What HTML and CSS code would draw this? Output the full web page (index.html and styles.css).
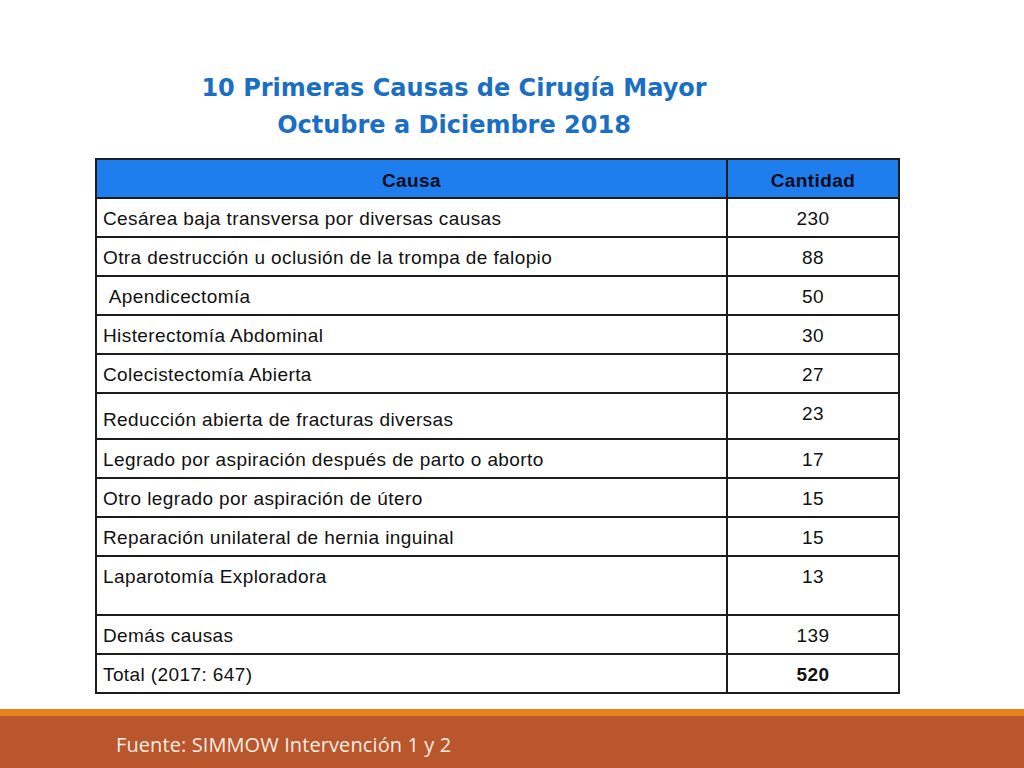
FILE: index.html
```html
<!DOCTYPE html>
<html lang="es">
<head>
<meta charset="utf-8">
<title>10 Primeras Causas de Cirugía Mayor</title>
<link rel="stylesheet" href="styles.css">
</head>
<body>
<div class="slide">
  <main class="content">
    <h1 class="title">10 Primeras Causas de Cirugía Mayor<br>Octubre a Diciembre 2018</h1>
    <table class="data">
      <thead>
        <tr class="head"><th class="c1">Causa</th><th class="c2">Cantidad</th></tr>
      </thead>
      <tbody>
        <tr><td class="c1">Cesárea baja transversa por diversas causas</td><td class="c2">230</td></tr>
        <tr><td class="c1">Otra destrucción u oclusión de la trompa de falopio</td><td class="c2">88</td></tr>
        <tr><td class="c1">&nbsp;Apendicectomía</td><td class="c2">50</td></tr>
        <tr><td class="c1">Histerectomía Abdominal</td><td class="c2">30</td></tr>
        <tr><td class="c1">Colecistectomía Abierta</td><td class="c2">27</td></tr>
        <tr class="tall"><td class="c1 low">Reducción abierta de fracturas diversas</td><td class="c2">23</td></tr>
        <tr><td class="c1">Legrado por aspiración después de parto o aborto</td><td class="c2">17</td></tr>
        <tr><td class="c1">Otro legrado por aspiración de útero</td><td class="c2">15</td></tr>
        <tr><td class="c1">Reparación unilateral de hernia inguinal</td><td class="c2">15</td></tr>
        <tr class="xtall"><td class="c1">Laparotomía Exploradora</td><td class="c2">13</td></tr>
        <tr><td class="c1">Demás causas</td><td class="c2">139</td></tr>
        <tr><td class="c1">Total (2017: 647)</td><td class="c2 strong">520</td></tr>
      </tbody>
    </table>
  </main>
  <footer class="footer">
    <p class="source">Fuente: SIMMOW Intervención 1 y 2</p>
  </footer>
</div>
</body>
</html>
```

FILE: styles.css
```css
* { box-sizing: border-box; }
html, body { margin: 0; padding: 0; background: #ffffff; }
.slide {
  width: 1024px;
  height: 768px;
  display: flex;
  flex-direction: column;
  overflow: hidden;
}
.content {
  flex: 1;
  padding-top: 70px;
}
.title {
  margin: 0;
  padding-right: 116px;
  text-align: center;
  font-family: "DejaVu Sans", "Liberation Sans", sans-serif;
  font-weight: bold;
  font-size: 24px;
  line-height: 37px;
  color: #1b6fc2;
}
.data {
  margin: 14px 0 0 95px;
  width: 805px;
  border-collapse: collapse;
  font-family: "Liberation Sans", Arial, sans-serif;
  font-size: 19px;
  letter-spacing: 0.4px;
  line-height: 22px;
  color: #111111;
}
.data th, .data td {
  border: 2px solid #1c1c1c;
  padding: 9px 6px 0;
  vertical-align: top;
}
.data tr { height: 39px; }
.data tr.tall { height: 46px; }
.data tr.xtall { height: 59px; }
.data .c1 { width: 631px; text-align: left; }
.data .c2 { text-align: center; }
.data .head th {
  background: #1f7eee;
  color: #0b0b1a;
  font-weight: bold;
  text-align: center;
  padding-top: 10px;
}
.data td.low { padding-top: 15px; }
.data td.strong { font-weight: bold; }
.footer {
  height: 59px;
  border-top: 7px solid #e8821c;
  background: #b9562c;
  padding-left: 116px;
}
.source {
  margin: 0;
  padding-top: 16px;
  font-family: "Open Sans", sans-serif;
  font-size: 20px;
  letter-spacing: 0.1px;
  line-height: 26px;
  color: #f8ece4;
}
```
